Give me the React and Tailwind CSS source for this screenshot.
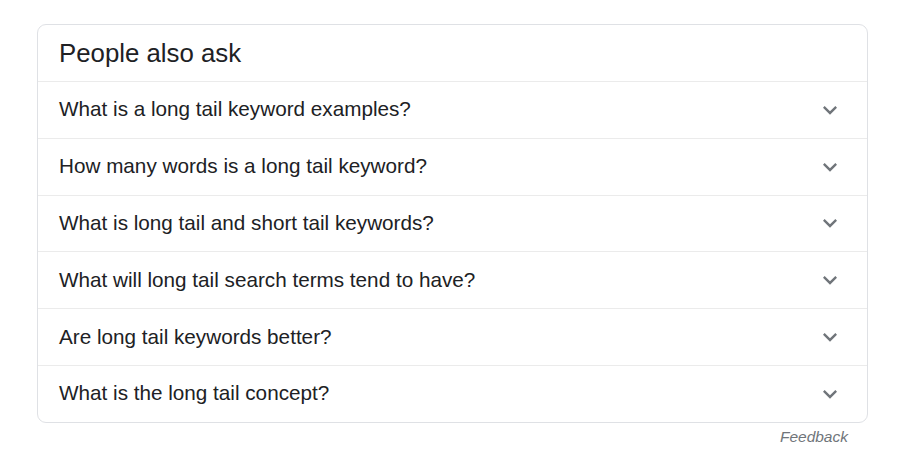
const questions = [
  'What is a long tail keyword examples?',
  'How many words is a long tail keyword?',
  'What is long tail and short tail keywords?',
  'What will long tail search terms tend to have?',
  'Are long tail keywords better?',
  'What is the long tail concept?',
];

function Chevron() {
  return (
    <svg width="28" height="28" viewBox="0 0 24 24" className="fill-[#70757a]">
      <path d="M16.59 8.59L12 13.17 7.41 8.59 6 10l6 6 6-6z" />
    </svg>
  );
}

export default function App() {
  return (
    <div className="min-h-screen bg-white pt-6 pl-[37px] pr-[35px] font-['Liberation_Sans',Arial,sans-serif] text-[#202124]">
      <div className="rounded-[9px] border border-[#dfe1e5]">
        <div className="h-[56px] flex items-center pl-[21px] text-[25.8px]">People also ask</div>
        {questions.map(q => (
          <div key={q} className="h-[56.8px] border-t border-[#ebebeb] flex items-center justify-between pl-[21px] pr-[23px]">
            <span className="text-[20.7px] -mt-[2px]">{q}</span>
            <Chevron />
          </div>
        ))}
      </div>
      <div className="flex justify-end pr-[20px] pt-[2px]">
        <span className="italic text-[15.5px] text-[#70757a]">Feedback</span>
      </div>
    </div>
  );
}
